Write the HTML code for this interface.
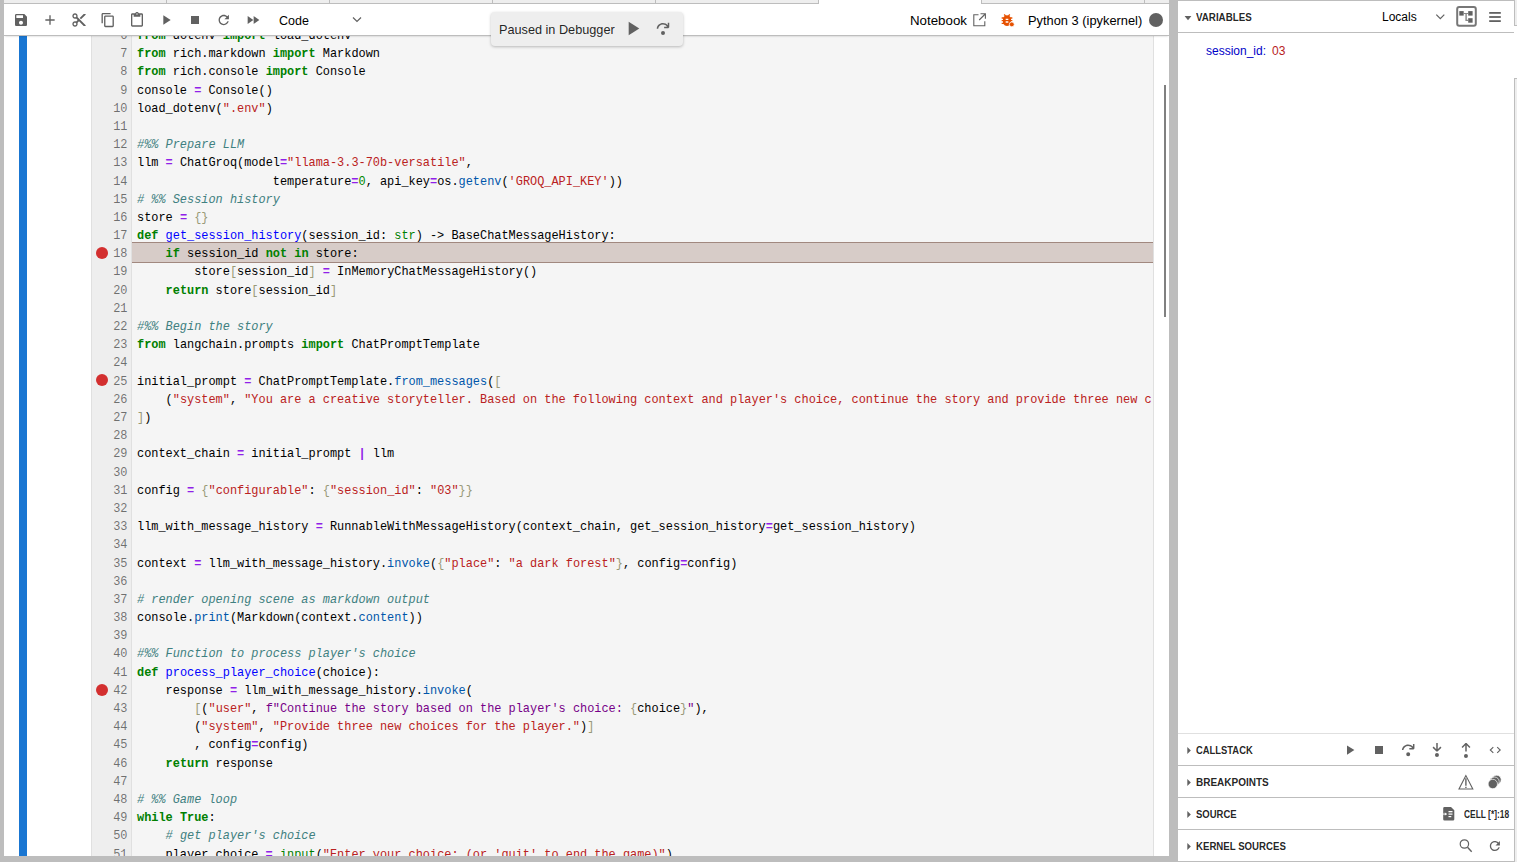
<!DOCTYPE html>
<html><head><meta charset="utf-8">
<style>
*{box-sizing:border-box}
html,body{margin:0;padding:0}
body{width:1517px;height:862px;background:#bdbdbd;position:relative;overflow:hidden;font-family:"Liberation Sans",sans-serif;color:rgba(0,0,0,0.87)}
.abs{position:absolute}
svg{position:absolute;display:block}
/* main panel */
#main{position:absolute;left:4px;top:0;width:1165px;height:856px;background:#fff;overflow:hidden}
#tabs{position:absolute;left:0;top:0;width:1165px;height:4px;background:#fff}
.tab{position:absolute;top:0;height:4px;background:#eeeeee;border-right:1px solid #bdbdbd;border-bottom:1px solid #bdbdbd}
#toolbar{position:absolute;left:0;top:4px;width:1165px;height:32px;background:#fff;border-bottom:1px solid #bdbdbd;box-shadow:0 1px 2px -1px rgba(0,0,0,0.24);z-index:5}
.ui13{font-size:13px;white-space:nowrap}
#content{position:absolute;left:0;top:36px;width:1165px;height:820px;background:#fff;overflow:hidden}
#bluebar{position:absolute;left:15px;top:0;width:8px;height:820px;background:#1976d2}
#editor{position:absolute;left:87px;top:-40px;width:1063px;height:900px;background:#f5f5f5;border-left:1px solid #e0e0e0;border-right:1px solid #e0e0e0;overflow:hidden}
#gutter{position:absolute;left:0;top:0;width:40px;height:900px;background:#eeeeee;border-right:1px solid #e0e0e0}
.ln{position:absolute;left:45px;height:18.2px;line-height:18.2px;font-family:"Liberation Mono",monospace;font-size:11.917px;white-space:pre;color:#000}
.gn{position:absolute;left:0;width:35.5px;text-align:right;height:18.2px;line-height:18.2px;font-family:"Liberation Mono",monospace;font-size:11.917px;white-space:pre;color:rgba(0,0,0,0.54)}
.k{color:#008000;font-weight:bold}
.s{color:#ba2121}
.s2{color:#708}
.c{color:#408080;font-style:italic}
.o{color:#9020e8;font-weight:bold}
.n{color:#080}
.b{color:#997}
.d{color:#00f}
.p{color:#05a}
.bi{color:#008000}
#hl{position:absolute;left:40px;width:1021px;top:246px;height:21px;background:#d7ccc8;border-top:1px solid #a1887f;border-bottom:1px solid #a1887f}
.bp{position:absolute;left:4px;width:12px;height:12px;border-radius:50%;background:#d32f2f}
/* popup */
#popup{position:absolute;left:487px;top:12px;width:192px;height:34px;background:#eeeeee;border-radius:4px;box-shadow:0 1px 3px rgba(0,0,0,0.25);z-index:10}
/* right panel */
#right{position:absolute;left:1178px;top:1px;width:339px;height:860px;background:#fff}
.hdr{position:absolute;left:0;width:336px;height:32px;border-bottom:1px solid #bdbdbd}
.htxt{position:absolute;left:18px;line-height:12px;font-weight:bold;font-size:10px;white-space:nowrap;color:rgba(0,0,0,0.87);transform-origin:0 0}
.caret{position:absolute;left:9px;width:0;height:0}
</style></head><body>
<div id="main">
  <div id="tabs">
    <div class="tab" style="left:-4px;width:167px"></div>
    <div class="tab" style="left:163px;width:163px"></div>
    <div class="tab" style="left:326px;width:163px"></div>
    <div class="tab" style="left:489px;width:163px"></div>
    <div class="tab" style="left:652px;width:163px"></div>
    <div class="tab" style="left:977px;width:164px;border-left:1px solid #bdbdbd"></div>
    <div class="tab" style="left:1141px;width:40px;border-right:none"></div>
  </div>
  <div id="toolbar">
    <!-- save -->
    <svg style="left:9px;top:8px" width="16" height="16" viewBox="0 0 24 24"><path fill="#616161" d="M17 3H5c-1.11 0-2 .9-2 2v14c0 1.1.89 2 2 2h14c1.1 0 2-.9 2-2V7l-4-4zm-5 16c-1.66 0-3-1.34-3-3s1.34-3 3-3 3 1.34 3 3-1.34 3-3 3zm3-10H5V5h10v4z"/></svg>
    <!-- add -->
    <svg style="left:37.7px;top:7.7px" width="16" height="16" viewBox="0 0 24 24"><path fill="#616161" d="M19 13h-6v6h-2v-6H5v-2h6V5h2v6h6v2z"/></svg>
    <!-- cut -->
    <svg style="left:66.5px;top:7.5px" width="16" height="16" viewBox="0 0 24 24"><path fill="#616161" d="M9.64 7.64c.23-.5.36-1.05.36-1.64 0-2.21-1.79-4-4-4S2 3.79 2 6s1.79 4 4 4c.59 0 1.14-.13 1.64-.36L10 12l-2.36 2.36C7.14 14.13 6.59 14 6 14c-2.21 0-4 1.79-4 4s1.79 4 4 4 4-1.79 4-4c0-.59-.13-1.14-.36-1.64L12 14l7 7h3v-1L9.64 7.64zM6 8c-1.1 0-2-.89-2-2s.9-2 2-2 2 .89 2 2-.9 2-2 2zm0 12c-1.1 0-2-.89-2-2s.9-2 2-2 2 .89 2 2-.9 2-2 2zM19 3l-6 6 2 2 7-7V3z"/></svg>
    <!-- copy -->
    <svg style="left:96px;top:7.7px" width="16" height="16" viewBox="0 0 18 18"><path fill="#616161" d="M11.9 1H3.2C2.4 1 1.7 1.7 1.7 2.5v10.2h1.5V2.5h8.7V1zm2.2 2.9h-8c-.8 0-1.5.7-1.5 1.5v10.2c0 .8.7 1.5 1.5 1.5h8c.8 0 1.5-.7 1.5-1.5V5.4c0-.8-.6-1.5-1.5-1.5zm0 11.6h-8V5.4h8v10.1z"/></svg>
    <!-- paste -->
    <svg style="left:124.7px;top:8px" width="16" height="16" viewBox="0 0 24 24"><path fill="#616161" d="M19 2h-4.18C14.4.84 13.3 0 12 0c-1.3 0-2.4.84-2.82 2H5c-1.1 0-2 .9-2 2v16c0 1.1.9 2 2 2h14c1.1 0 2-.9 2-2V4c0-1.1-.9-2-2-2zm-7 0c.55 0 1 .45 1 1s-.45 1-1 1-1-.45-1-1 .45-1 1-1zm7 18H5V4h2v3h10V4h2v16z"/></svg>
    <!-- run -->
    <svg style="left:153.7px;top:7.7px" width="16" height="16" viewBox="0 0 24 24"><path fill="#616161" d="M8 5v14l11-7z"/></svg>
    <!-- stop -->
    <svg style="left:183px;top:8px" width="16" height="16" viewBox="0 0 24 24"><path fill="#616161" d="M6 6h12v12H6z"/></svg>
    <!-- restart -->
    <svg style="left:212px;top:8px" width="15.5" height="16" viewBox="0 0 24 24"><path fill="#616161" d="M17.65 6.35C16.2 4.9 14.21 4 12 4c-4.42 0-7.99 3.58-7.99 8s3.57 8 7.99 8c3.73 0 6.84-2.55 7.73-6h-2.08c-.82 2.33-3.04 4-5.65 4-3.31 0-6-2.69-6-6s2.69-6 6-6c1.66 0 3.14.69 4.22 1.78L13 11h7V4l-2.35 2.35z"/></svg>
    <!-- fast forward -->
    <svg style="left:240.5px;top:8px" width="16" height="16" viewBox="0 0 24 24"><path fill="#616161" d="M4 18l8.5-6L4 6v12zm9-12v12l8.5-6L13 6z"/></svg>
    <div class="abs ui13" style="left:275px;top:8px;font-size:12.5px;line-height:18px;color:#000">Code</div>
    <svg style="left:346.5px;top:12px" width="12" height="8" viewBox="0 0 12 8"><path fill="none" stroke="#616161" stroke-width="1.2" d="M2 1.5l4 4 4-4"/></svg>
    <div class="abs ui13" style="left:906px;top:8px;font-size:13.3px;line-height:18px;color:#000">Notebook</div>
    <svg style="left:969px;top:9px" width="14" height="14" viewBox="0 0 14 14"><path fill="none" stroke="#616161" stroke-width="1.1" d="M5.5 1.8H0.8V12.8H11.8V8.3"/><path fill="none" stroke="#616161" stroke-width="1.1" d="M7.5 0.8H12.4V5.7M12.2 1L6.2 7"/></svg>
    <!-- bug -->
    <svg style="left:994.8px;top:8px" width="16" height="16" viewBox="0 0 24 24"><path fill="#e65100" d="M20 8h-2.81c-.45-.78-1.07-1.450-1.820-1.960L17 4.41 15.59 3l-2.17 2.17C12.96 5.06 12.49 5 12 5c-.49 0-.96.06-1.41.17L8.41 3 7 4.41l1.62 1.63C7.88 6.55 7.26 7.22 6.81 8H4v2h2.09c-.05.33-.09.66-.09 1v1H4v2h2v1c0 .34.04.67.09 1H4v2h2.81c1.04 1.79 2.970 3 5.190 3s4.150-1.210 5.190-3H20v-2h-2.09c.05-.33.09-.66.09-1v-1h2v-2h-2v-1c0-.34-.04-.67-.09-1H20V8zm-6 8h-4v-2h4v2zm0-4h-4v-2h4v2z"/><circle cx="19.2" cy="18.6" r="3.7" fill="#e65100" stroke="#fff" stroke-width="1.2"/></svg>
    <div class="abs ui13" style="left:1024px;top:8px;font-size:12.85px;line-height:18px;color:#000">Python 3 (ipykernel)</div>
    <div class="abs" style="left:1145px;top:9px;width:14px;height:14px;border-radius:50%;background:#616161"></div>
  </div>
  <div id="content">
    <div id="bluebar"></div>
    <div id="editor">
      <div id="gutter">
<div class="gn" style="top:31.00px">6</div>
<div class="gn" style="top:49.19px">7</div>
<div class="gn" style="top:67.38px">8</div>
<div class="gn" style="top:85.57px">9</div>
<div class="gn" style="top:103.76px">10</div>
<div class="gn" style="top:121.95px">11</div>
<div class="gn" style="top:140.14px">12</div>
<div class="gn" style="top:158.33px">13</div>
<div class="gn" style="top:176.52px">14</div>
<div class="gn" style="top:194.71px">15</div>
<div class="gn" style="top:212.90px">16</div>
<div class="gn" style="top:231.09px">17</div>
<div class="gn" style="top:249.28px">18</div>
<div class="gn" style="top:267.47px">19</div>
<div class="gn" style="top:285.66px">20</div>
<div class="gn" style="top:303.85px">21</div>
<div class="gn" style="top:322.04px">22</div>
<div class="gn" style="top:340.23px">23</div>
<div class="gn" style="top:358.42px">24</div>
<div class="gn" style="top:376.61px">25</div>
<div class="gn" style="top:394.80px">26</div>
<div class="gn" style="top:412.99px">27</div>
<div class="gn" style="top:431.18px">28</div>
<div class="gn" style="top:449.37px">29</div>
<div class="gn" style="top:467.56px">30</div>
<div class="gn" style="top:485.75px">31</div>
<div class="gn" style="top:503.94px">32</div>
<div class="gn" style="top:522.13px">33</div>
<div class="gn" style="top:540.32px">34</div>
<div class="gn" style="top:558.51px">35</div>
<div class="gn" style="top:576.70px">36</div>
<div class="gn" style="top:594.89px">37</div>
<div class="gn" style="top:613.08px">38</div>
<div class="gn" style="top:631.27px">39</div>
<div class="gn" style="top:649.46px">40</div>
<div class="gn" style="top:667.65px">41</div>
<div class="gn" style="top:685.84px">42</div>
<div class="gn" style="top:704.03px">43</div>
<div class="gn" style="top:722.22px">44</div>
<div class="gn" style="top:740.41px">45</div>
<div class="gn" style="top:758.60px">46</div>
<div class="gn" style="top:776.79px">47</div>
<div class="gn" style="top:794.98px">48</div>
<div class="gn" style="top:813.17px">49</div>
<div class="gn" style="top:831.36px">50</div>
<div class="gn" style="top:849.55px">51</div>
      </div>
      <div id="hl"></div>
      <div class="bp" style="top:251px"></div>
      <div class="bp" style="top:378.4px"></div>
      <div class="bp" style="top:687.8px"></div>
<div class="ln" style="top:31.00px"><span class="k">from</span> dotenv <span class="k">import</span> load_dotenv</div>
<div class="ln" style="top:49.19px"><span class="k">from</span> rich.markdown <span class="k">import</span> Markdown</div>
<div class="ln" style="top:67.38px"><span class="k">from</span> rich.console <span class="k">import</span> Console</div>
<div class="ln" style="top:85.57px">console <span class="o">=</span> Console()</div>
<div class="ln" style="top:103.76px">load_dotenv(<span class="s">&quot;.env&quot;</span>)</div>
<div class="ln" style="top:121.95px"></div>
<div class="ln" style="top:140.14px"><span class="c">#%% Prepare LLM</span></div>
<div class="ln" style="top:158.33px">llm <span class="o">=</span> ChatGroq(model<span class="o">=</span><span class="s">&quot;llama-3.3-70b-versatile&quot;</span>,</div>
<div class="ln" style="top:176.52px">                   temperature<span class="o">=</span><span class="n">0</span>, api_key<span class="o">=</span>os.<span class="p">getenv</span>(<span class="s">&#x27;GROQ_API_KEY&#x27;</span>))</div>
<div class="ln" style="top:194.71px"><span class="c"># %% Session history</span></div>
<div class="ln" style="top:212.90px">store <span class="o">=</span> <span class="b">{}</span></div>
<div class="ln" style="top:231.09px"><span class="k">def</span> <span class="d">get_session_history</span>(session_id: <span class="bi">str</span>) -&gt; BaseChatMessageHistory:</div>
<div class="ln" style="top:249.28px">    <span class="k">if</span> session_id <span class="k">not</span> <span class="k">in</span> store:</div>
<div class="ln" style="top:267.47px">        store<span class="b">[</span>session_id<span class="b">]</span> <span class="o">=</span> InMemoryChatMessageHistory()</div>
<div class="ln" style="top:285.66px">    <span class="k">return</span> store<span class="b">[</span>session_id<span class="b">]</span></div>
<div class="ln" style="top:303.85px"></div>
<div class="ln" style="top:322.04px"><span class="c">#%% Begin the story</span></div>
<div class="ln" style="top:340.23px"><span class="k">from</span> langchain.prompts <span class="k">import</span> ChatPromptTemplate</div>
<div class="ln" style="top:358.42px"></div>
<div class="ln" style="top:376.61px">initial_prompt <span class="o">=</span> ChatPromptTemplate.<span class="p">from_messages</span>(<span class="b">[</span></div>
<div class="ln" style="top:394.80px">    (<span class="s">&quot;system&quot;</span>, <span class="s">&quot;You are a creative storyteller. Based on the following context and player&#x27;s choice, continue the story and provide three new c</span></div>
<div class="ln" style="top:412.99px"><span class="b">]</span>)</div>
<div class="ln" style="top:431.18px"></div>
<div class="ln" style="top:449.37px">context_chain <span class="o">=</span> initial_prompt <span class="o">|</span> llm</div>
<div class="ln" style="top:467.56px"></div>
<div class="ln" style="top:485.75px">config <span class="o">=</span> <span class="b">{</span><span class="s">&quot;configurable&quot;</span>: <span class="b">{</span><span class="s">&quot;session_id&quot;</span>: <span class="s">&quot;03&quot;</span><span class="b">}}</span></div>
<div class="ln" style="top:503.94px"></div>
<div class="ln" style="top:522.13px">llm_with_message_history <span class="o">=</span> RunnableWithMessageHistory(context_chain, get_session_history<span class="o">=</span>get_session_history)</div>
<div class="ln" style="top:540.32px"></div>
<div class="ln" style="top:558.51px">context <span class="o">=</span> llm_with_message_history.<span class="p">invoke</span>(<span class="b">{</span><span class="s">&quot;place&quot;</span>: <span class="s">&quot;a dark forest&quot;</span><span class="b">}</span>, config<span class="o">=</span>config)</div>
<div class="ln" style="top:576.70px"></div>
<div class="ln" style="top:594.89px"><span class="c"># render opening scene as markdown output</span></div>
<div class="ln" style="top:613.08px">console.<span class="p">print</span>(Markdown(context.<span class="p">content</span>))</div>
<div class="ln" style="top:631.27px"></div>
<div class="ln" style="top:649.46px"><span class="c">#%% Function to process player&#x27;s choice</span></div>
<div class="ln" style="top:667.65px"><span class="k">def</span> <span class="d">process_player_choice</span>(choice):</div>
<div class="ln" style="top:685.84px">    response <span class="o">=</span> llm_with_message_history.<span class="p">invoke</span>(</div>
<div class="ln" style="top:704.03px">        <span class="b">[</span>(<span class="s">&quot;user&quot;</span>, <span class="s2">f&quot;Continue the story based on the player&#x27;s choice: </span><span class="b">{</span>choice<span class="b">}</span><span class="s2">&quot;</span>),</div>
<div class="ln" style="top:722.22px">        (<span class="s">&quot;system&quot;</span>, <span class="s">&quot;Provide three new choices for the player.&quot;</span>)<span class="b">]</span></div>
<div class="ln" style="top:740.41px">        , config<span class="o">=</span>config)</div>
<div class="ln" style="top:758.60px">    <span class="k">return</span> response</div>
<div class="ln" style="top:776.79px"></div>
<div class="ln" style="top:794.98px"><span class="c"># %% Game loop</span></div>
<div class="ln" style="top:813.17px"><span class="k">while</span> <span class="k">True</span>:</div>
<div class="ln" style="top:831.36px">    <span class="c"># get player&#x27;s choice</span></div>
<div class="ln" style="top:849.55px">    player_choice <span class="o">=</span> <span class="bi">input</span>(<span class="s">&quot;Enter your choice: (or &#x27;quit&#x27; to end the game)&quot;</span>)</div>
    </div>
    <div class="abs" style="left:1160px;top:49px;width:2px;height:232px;background:#808080"></div>
  </div>
  <div id="popup">
    <div class="abs ui13" style="left:8px;top:10px;font-size:12.7px;line-height:16px;color:rgba(0,0,0,0.87)">Paused in Debugger</div>
    <svg style="left:130.3px;top:5.2px" width="23.1" height="23.1" viewBox="0 0 24 24"><path fill="#616161" d="M8 5v14l11-7z"/></svg>
    <svg style="left:164px;top:9px" width="16" height="16" viewBox="0 0 16 16"><path fill="#616161" d="M14.25 5.75v-4h-1.5v2.542c-1.145-1.359-2.911-2.209-4.84-2.209-3.177 0-5.920 2.307-6.160 5.398l-.02.269h1.501l.022-.226c.212-2.195 2.202-3.94 4.656-3.94 1.736 0 3.244.875 4.05 2.166h-2.83v1.5h4.163l.962-.975V5.750h-.004zM8 14a2 2 0 1 1 0-4 2 2 0 0 1 0 4z"/></svg>
  </div>
</div>

<div id="right">
  <div class="hdr" style="top:0;height:32px"></div>
  <div class="htxt" style="top:11px;transform:scaleX(0.977)">VARIABLES</div>
  <div class="abs" style="left:204px;top:7px;font-size:12px;line-height:18px;color:#000;white-space:nowrap">Locals</div>
  <div class="abs" style="left:28px;top:42px;font-size:12px;line-height:16px;white-space:nowrap"><span style="color:#0000c8">session_id:</span><span style="color:#b71c1c;margin-left:6px">03</span></div>
  <div class="abs" style="left:0;top:732px;width:336px;height:1px;background:#e0e0e0"></div>
  <div class="hdr" style="top:733px"></div>
  <div class="htxt" style="top:744px;transform:scaleX(0.94)">CALLSTACK</div>
  <div class="hdr" style="top:765px"></div>
  <div class="htxt" style="top:776px">BREAKPOINTS</div>
  <div class="hdr" style="top:797px"></div>
  <div class="htxt" style="top:808px;transform:scaleX(0.95)">SOURCE</div>
  <div class="htxt" id="cell" style="left:286px;top:808px;font-size:10px;transform:scaleX(0.84)">CELL [*]:18</div>
  <div class="hdr" style="top:829px"></div>
  <div class="htxt" style="top:840px;transform:scaleX(0.965)">KERNEL SOURCES</div>
  <!-- right sidebar edge -->
  <div class="abs" style="left:336px;top:-1px;width:3px;height:26px;background:#eeeeee;border-left:1px solid #bdbdbd;border-bottom:1px solid #bdbdbd"></div>
  <div class="abs" style="left:336px;top:77px;width:3px;height:784px;background:#eeeeee;border-left:1px solid #bdbdbd;border-top:1px solid #bdbdbd"></div>
</div>
<svg id="ov" style="left:0;top:0;z-index:20;pointer-events:none" width="1517" height="862" viewBox="0 0 1517 862">
  <g fill="#616161">
    <!-- variables caret -->
    <path d="M1184.6 16h6.8l-3.4 4.2z"/>
    <!-- locals chevron -->
    <path fill="none" stroke="#616161" stroke-width="1.2" d="M1436.3 14.6l4 4 4-4"/>
    <!-- tree box -->
    <rect x="1457.2" y="7.1" width="18.6" height="18.6" rx="2" ry="2" fill="none" stroke="#777" stroke-width="2"/>
    <rect x="1459.3" y="11.1" width="4.4" height="4.5"/>
    <rect x="1468.2" y="11.1" width="4.4" height="4.5"/>
    <rect x="1468.2" y="18.2" width="4.4" height="4.5"/>
    <path fill="#888" d="M1463.7 13.1h4.5v1h-4.5zM1465.4 13.6h1.4v7.2h-1.4zM1465.4 19.8h2.8v1.2h-2.8z"/>
    <!-- hamburger -->
    <rect x="1489.2" y="12" width="11.6" height="1.8"/>
    <rect x="1489.2" y="16.1" width="11.6" height="1.8"/>
    <rect x="1489.2" y="20.2" width="11.6" height="1.8"/>
    <!-- row carets -->
    <path d="M1187.3 747v7l3.5-3.5z"/>
    <path d="M1187.3 779v7l3.5-3.5z"/>
    <path d="M1187.3 811v7l3.5-3.5z"/>
    <path d="M1187.3 843v7l3.5-3.5z"/>
    <!-- callstack icons -->
    <path d="M1347 745.5v9.2l7.4-4.6z"/>
    <rect x="1375" y="746" width="8" height="8"/>
  </g>
  <g fill="#616161">
    <g transform="translate(1400.2 742.3) scale(1)"><path d="M14.25 5.75v-4h-1.5v2.542c-1.145-1.359-2.911-2.209-4.84-2.209-3.177 0-5.920 2.307-6.160 5.398l-.02.269h1.501l.022-.226c.212-2.195 2.202-3.94 4.656-3.94 1.736 0 3.244.875 4.05 2.166h-2.83v1.5h4.163l.962-.975V5.750h-.004zM8 14a2 2 0 1 1 0-4 2 2 0 0 1 0 4z"/></g>
    <g transform="translate(1429 742)"><path d="M8 9.532h.542l3.905-3.905-1.061-1.06-2.637 2.61V1H7.251v6.177l-2.637-2.61-1.061 1.06 3.905 3.905H8zm1.956 3.481a2 2 0 1 1-4 0 2 2 0 0 1 4 0z"/></g>
    <g transform="translate(1458 742)"><path d="M8 1h-.542L3.553 4.905l1.061 1.06 2.637-2.61v6.177h1.498V3.355l2.637 2.61 1.061-1.06L8.542 1H8zm1.956 13.013a2 2 0 1 1-4 0 2 2 0 0 1 4 0z"/></g>
  </g>
  <path fill="none" stroke="#616161" stroke-width="1.1" d="M1493.3 747.2l-3 2.8 3 2.8M1497.2 747.2l3 2.8-3 2.8"/>
  <!-- breakpoints icons -->
  <path fill="none" stroke="#616161" stroke-width="1.1" d="M1465.9 775.6L1459 789h13.8z"/>
  <path stroke="#616161" stroke-width="1.4" d="M1465.9 778.3v7.5"/>
  <path stroke="#616161" stroke-width="1.4" d="M1465.9 786.8v1.1"/>
  <g fill="#616161" stroke="#fff" stroke-width="0.7">
    <circle cx="1496.6" cy="779.8" r="4.6"/>
    <circle cx="1494.6" cy="781.6" r="4.6"/>
    <circle cx="1492.8" cy="784" r="4.7"/>
  </g>
  <!-- source file icon -->
  <path fill="#616161" d="M1444.5 807h6.5l3.3 3.3v9a1.3 1.3 0 0 1-1.3 1.3h-8.5a1.3 1.3 0 0 1-1.3-1.3v-11a1.3 1.3 0 0 1 1.3-1.3z"/>
  <g fill="#fff"><rect x="1448.5" y="811" width="4" height="1.3"/><rect x="1448.5" y="813.5" width="4" height="1.2"/><rect x="1448.5" y="816" width="2.8" height="1.2"/><rect x="1441.5" y="813.6" width="5.5" height="0.9"/><path d="M1444.8 812.3l1.6 1.7-1.6 1.7z"/></g>
  <!-- search -->
  <circle cx="1464.4" cy="844" r="4.2" fill="none" stroke="#616161" stroke-width="1.2"/>
  <path stroke="#616161" stroke-width="1.4" d="M1467.5 847.3l4.2 4.4"/>
  <!-- refresh -->
  <g transform="translate(1487.3 838.5) scale(0.63)"><path fill="#616161" d="M17.65 6.35C16.2 4.9 14.21 4 12 4c-4.42 0-7.99 3.58-7.99 8s3.57 8 7.99 8c3.73 0 6.84-2.55 7.73-6h-2.08c-.82 2.330-3.04 4-5.65 4-3.31 0-6-2.69-6-6s2.69-6 6-6c1.66 0 3.14.69 4.22 1.78L13 11h7V4l-2.35 2.35z"/></g>
</svg>
</body></html>
